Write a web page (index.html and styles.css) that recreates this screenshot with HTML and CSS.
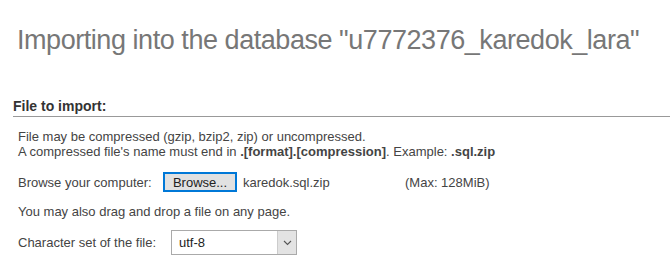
FILE: index.html
```html
<!DOCTYPE html>
<html lang="en">
<head>
  <meta charset="UTF-8" />
  <title>Import</title>
  <link rel="stylesheet" href="styles.css">
</head>
<body>
  <h2 class="page-title">Importing into the database "u7772376_karedok_lara"</h2>

  <div class="importSection">
    <div class="sectionTitle">File to import:</div>

    <div class="sectionBody">
      <p class="hint">
        File may be compressed (gzip, bzip2, zip) or uncompressed.<br>
        A compressed file's name must end in <b>.[format].[compression]</b>. Example: <b>.sql.zip</b>
      </p>

      <div class="row upload">
        <label class="rowLabel">Browse your computer:</label>
        <button class="browseBtn">Browse...</button>
        <span class="fileName">karedok.sql.zip</span>
        <span class="maxSize">(Max: 128MiB)</span>
      </div>

      <p class="dragHint">You may also drag and drop a file on any page.</p>

      <div class="row charset">
        <label class="rowLabel" for="charset">Character set of the file:</label>
        <div class="select" id="charset">
          <span class="selectValue">utf-8</span>
          <span class="selectArrow">
            <svg width="9" height="6" viewBox="0 0 9 6"><path d="M1 1 L4.5 4.5 L8 1" fill="none" stroke="#555" stroke-width="1.1"/></svg>
          </span>
        </div>
      </div>
    </div>
  </div>
</body>
</html>
```

FILE: styles.css
```css
* {
  box-sizing: border-box;
}
body {
  margin: 0;
  padding: 0 0 0 13px;
  background: #fff;
  color: #444;
  font-family: "Liberation Sans", Arial, sans-serif;
  font-size: 13px;
}
.page-title {
  margin: 0;
  padding: 25px 0 0 4px;
  height: 98px;
  font-size: 27px;
  line-height: 31px;
  font-weight: normal;
  color: #777;
  letter-spacing: -0.45px;
  white-space: nowrap;
}
.sectionTitle {
  font-weight: bold;
  font-size: 14px;
  line-height: 16px;
  color: #333;
  padding-bottom: 2px;
  border-bottom: 1px solid #999;
}
.sectionBody {
  padding-left: 5px;
}
.hint {
  margin: 12px 0 0;
  line-height: 15px;
}
.row {
  display: flex;
  align-items: center;
}
.upload {
  margin-top: 13px;
}
.upload .rowLabel {
  width: 145px;
}
.charset .rowLabel {
  width: 153px;
}
.browseBtn {
  font-family: "Liberation Sans", Arial, sans-serif;
  font-size: 13px;
  width: 74px;
  height: 20px;
  padding: 0;
  background: #e1e1e1;
  border: 2px solid #0078d7;
  color: #222;
}
.fileName {
  margin-left: 6px;
  width: 162px;
}
.dragHint {
  margin: 12px 0 0;
  line-height: 15px;
}
.charset {
  margin-top: 11px;
}
.select {
  display: flex;
  width: 126px;
  height: 25px;
  border: 1px solid #aaa;
}
.selectValue {
  flex: 1;
  padding: 4px 0 0 7px;
  color: #222;
}
.selectArrow {
  width: 19px;
  background: #e3e3e3;
  border-left: 1px solid #ccc;
  display: flex;
  align-items: center;
  justify-content: center;
}
```
